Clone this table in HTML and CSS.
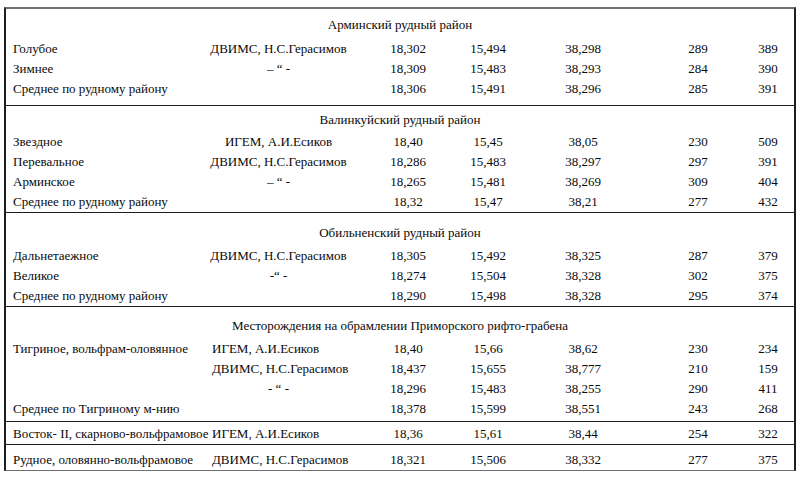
FILE: index.html
```html
<!DOCTYPE html>
<html lang="ru">
<head>
<meta charset="utf-8">
<title>Изотопный состав свинца</title>
<link rel="stylesheet" href="styles.css">
</head>
<body>
<div class="table">
  <div class="section s1">
    <div class="title">Арминский рудный район</div>
    <div class="row"><span class="name">Голубое</span><span class="src">ДВИМС, Н.С.Герасимов</span><span>18,302</span><span>15,494</span><span>38,298</span><span>289</span><span>389</span></div>
    <div class="row"><span class="name">Зимнее</span><span class="src">– “ -</span><span>18,309</span><span>15,483</span><span>38,293</span><span>284</span><span>390</span></div>
    <div class="row"><span class="name">Среднее по рудному району</span><span class="src"></span><span>18,306</span><span>15,491</span><span>38,296</span><span>285</span><span>391</span></div>
  </div>
  <div class="section s2">
    <div class="title">Валинкуйский рудный район</div>
    <div class="row"><span class="name">Звездное</span><span class="src">ИГЕМ, А.И.Есиков</span><span>18,40</span><span>15,45</span><span>38,05</span><span>230</span><span>509</span></div>
    <div class="row"><span class="name">Перевальное</span><span class="src">ДВИМС, Н.С.Герасимов</span><span>18,286</span><span>15,483</span><span>38,297</span><span>297</span><span>391</span></div>
    <div class="row"><span class="name">Арминское</span><span class="src">– “ -</span><span>18,265</span><span>15,481</span><span>38,269</span><span>309</span><span>404</span></div>
    <div class="row"><span class="name">Среднее по рудному району</span><span class="src"></span><span>18,32</span><span>15,47</span><span>38,21</span><span>277</span><span>432</span></div>
  </div>
  <div class="section s3">
    <div class="title">Обильненский рудный район</div>
    <div class="row"><span class="name">Дальнетаежное</span><span class="src">ДВИМС, Н.С.Герасимов</span><span>18,305</span><span>15,492</span><span>38,325</span><span>287</span><span>379</span></div>
    <div class="row"><span class="name">Великое</span><span class="src">-“ -</span><span>18,274</span><span>15,504</span><span>38,328</span><span>302</span><span>375</span></div>
    <div class="row"><span class="name">Среднее по рудному району</span><span class="src"></span><span>18,290</span><span>15,498</span><span>38,328</span><span>295</span><span>374</span></div>
  </div>
  <div class="section s4">
    <div class="title">Месторождения на обрамлении Приморского рифто-грабена</div>
    <div class="row"><span class="name">Тигриное, вольфрам-оловянное</span><span class="src left">ИГЕМ, А.И.Есиков</span><span>18,40</span><span>15,66</span><span>38,62</span><span>230</span><span>234</span></div>
    <div class="row"><span class="name"></span><span class="src left">ДВИМС, Н.С.Герасимов</span><span>18,437</span><span>15,655</span><span>38,777</span><span>210</span><span>159</span></div>
    <div class="row"><span class="name"></span><span class="src">- “ -</span><span>18,296</span><span>15,483</span><span>38,255</span><span>290</span><span>411</span></div>
    <div class="row"><span class="name">Среднее по Тигриному м-нию</span><span class="src"></span><span>18,378</span><span>15,599</span><span>38,551</span><span>243</span><span>268</span></div>
  </div>
  <div class="section s5">
    <div class="row"><span class="name">Восток- II, скарново-вольфрамовое</span><span class="src left">ИГЕМ, А.И.Есиков</span><span>18,36</span><span>15,61</span><span>38,44</span><span>254</span><span>322</span></div>
  </div>
  <div class="section s6">
    <div class="row"><span class="name">Рудное, оловянно-вольфрамовое</span><span class="src left">ДВИМС, Н.С.Герасимов</span><span>18,321</span><span>15,506</span><span>38,332</span><span>277</span><span>375</span></div>
  </div>
</div>
</body>
</html>
```

FILE: styles.css
```css
html, body {
  margin: 0;
  padding: 0;
  background: #ffffff;
}

body {
  font-family: "Liberation Serif", "Times New Roman", serif;
  font-size: 13px;
  color: #0a0a0a;
}

.table {
  margin: 7px 0 0 4px;
  width: 792px;
  box-sizing: border-box;
  border-top: 2px solid #6e6e6e;
  border-left: 2px solid #1e1e1e;
  border-right: 2px solid #1e1e1e;
  border-bottom: 1px solid #6e6e6e;
}

.section {
  display: flex;
  flex-direction: column;
}

.section + .section {
  border-top: 1px solid #1e1e1e;
}

.title {
  height: 20px;
  line-height: 20px;
  text-align: center;
}

.row {
  display: grid;
  grid-template-columns: 199px 147px 112px 48px 142px 88px 52px;
  height: 20px;
  line-height: 20px;
  text-align: center;
  white-space: nowrap;
}

.row .name {
  text-align: left;
  padding-left: 7px;
}

.row .src.left {
  text-align: left;
  padding-left: 7px;
}

.s1 { padding: 6px 0 6px; }
.s1 .title { margin-bottom: 4px; }

.s2 { padding: 4px 0 0; }
.s2 .title { margin-bottom: 2px; }

.s3 { padding: 10px 0 0; }
.s3 .title { margin-bottom: 3px; }

.s4 { padding: 9px 0 2px; }
.s4 .title { margin-bottom: 3px; }

.s5 { padding: 2px 0 0; }

.s6 { padding: 5px 0 0; border-top-color: #5a5a5a; border-top-width: 2px; }
```
